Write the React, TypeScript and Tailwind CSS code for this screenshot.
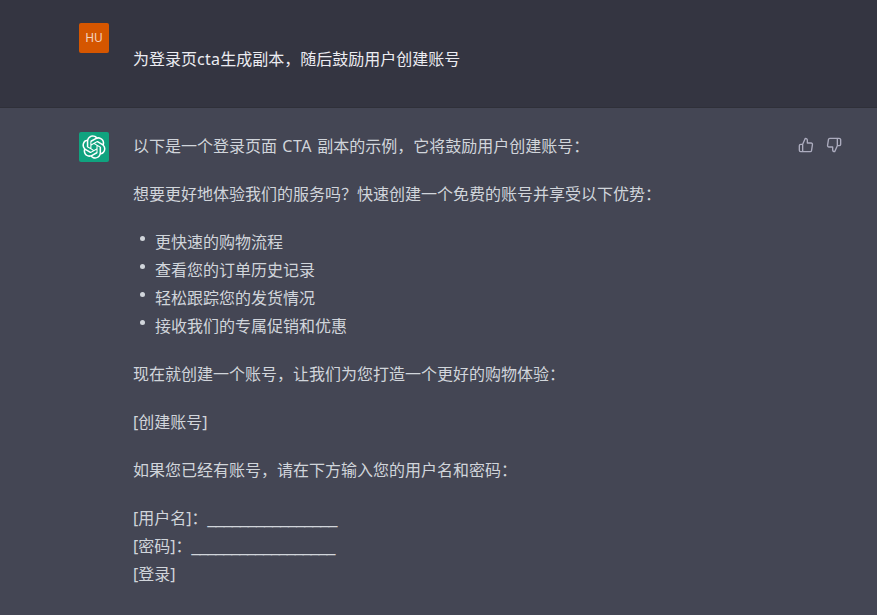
const font = "font-['Noto_Sans','Noto_Sans_CJK_SC',sans-serif]";

const openaiPath =
  "M37.5324 16.8707C37.9808 15.5241 38.1363 14.0974 37.9886 12.6859C37.8409 11.2744 37.3934 9.91076 36.676 8.68622C35.6126 6.83404 33.9882 5.3676 32.0373 4.4985C30.0864 3.62941 27.9098 3.40259 25.8215 3.85078C24.8796 2.7893 23.7219 1.94125 22.4257 1.36341C21.1295 0.785575 19.7249 0.491269 18.3058 0.500197C16.1708 0.495044 14.0893 1.16803 12.3614 2.42214C10.6335 3.67624 9.34853 5.44666 8.6917 7.47815C7.30085 7.76286 5.98686 8.3414 4.8377 9.17505C3.68854 10.0087 2.73073 11.0782 2.02839 12.312C0.956464 14.1591 0.498905 16.2988 0.721698 18.4228C0.944492 20.5467 1.83612 22.5449 3.268 24.1293C2.81966 25.4759 2.66413 26.9026 2.81182 28.3141C2.95951 29.7256 3.40701 31.0892 4.12437 32.3138C5.18791 34.1659 6.8123 35.6322 8.76321 36.5013C10.7141 37.3704 12.8907 37.5973 14.9789 37.1492C15.9208 38.2107 17.0786 39.0587 18.3747 39.6366C19.6709 40.2144 21.0755 40.5087 22.4946 40.4998C24.6307 40.5054 26.7133 39.8321 28.4418 38.5772C30.1704 37.3223 31.4556 35.5506 32.1119 33.5179C33.5027 33.2332 34.8167 32.6547 35.9659 31.821C37.115 30.9874 38.0728 29.9178 38.7752 28.684C39.8458 26.8371 40.3023 24.6979 40.0789 22.5748C39.8556 20.4517 38.9639 18.4544 37.5324 16.8707ZM22.4978 37.8849C20.7443 37.8874 19.0459 37.2733 17.6994 36.1501C17.7601 36.117 17.8666 36.0586 17.936 36.0161L25.9004 31.4156C26.1003 31.3019 26.2663 31.137 26.3813 30.9378C26.4964 30.7386 26.5563 30.5124 26.5549 30.2825V19.0542L29.9213 20.998C29.9389 21.0068 29.9541 21.0198 29.9656 21.0359C29.977 21.052 29.9842 21.0707 29.9867 21.0902V30.3889C29.9842 32.375 29.1946 34.2791 27.7909 35.6841C26.3872 37.0892 24.4838 37.8806 22.4978 37.8849ZM6.39227 31.0064C5.51397 29.4888 5.19742 27.7107 5.49804 25.9832C5.55718 26.0187 5.66048 26.0818 5.73461 26.1244L13.699 30.7248C13.8975 30.8408 14.1233 30.902 14.3532 30.902C14.583 30.902 14.8088 30.8408 15.0073 30.7248L24.731 25.1103V28.9979C24.7321 29.0177 24.7283 29.0376 24.7199 29.0556C24.7115 29.0736 24.6988 29.0893 24.6829 29.1012L16.6317 33.7497C14.9096 34.7416 12.8643 35.0097 10.9447 34.4954C9.02506 33.9811 7.38785 32.7263 6.39227 31.0064ZM4.29707 13.6194C5.17156 12.0998 6.55279 10.9364 8.19885 10.3327C8.19885 10.4013 8.19491 10.5228 8.19491 10.6071V19.808C8.19351 20.0378 8.25334 20.2638 8.36823 20.4629C8.48312 20.6619 8.64893 20.8267 8.84863 20.9404L18.5723 26.5542L15.206 28.4979C15.1894 28.5089 15.1703 28.5155 15.1505 28.5173C15.1307 28.5191 15.1107 28.516 15.0924 28.5082L7.04046 23.8557C5.32135 22.8601 4.06716 21.2235 3.55289 19.3046C3.03862 17.3858 3.30624 15.3413 4.29707 13.6194ZM31.955 20.0556L22.2312 14.4411L25.5976 12.4981C25.6142 12.4872 25.6333 12.4805 25.6531 12.4787C25.6729 12.4769 25.6928 12.4801 25.7111 12.4879L33.7631 17.1364C34.9967 17.849 36.0017 18.8982 36.6606 20.1613C37.3194 21.4244 37.6047 22.849 37.4832 24.2684C37.3617 25.6878 36.8382 27.0432 35.9743 28.1759C35.1103 29.3086 33.9415 30.1717 32.6047 30.6641C32.6047 30.5947 32.6047 30.4733 32.6047 30.3889V21.188C32.6066 20.9586 32.5474 20.7328 32.4332 20.5338C32.319 20.3348 32.154 20.1698 31.955 20.0556ZM35.3055 15.0128C35.2464 14.9765 35.1431 14.9142 35.069 14.8717L27.1045 10.2712C26.906 10.1554 26.6803 10.0943 26.4504 10.0943C26.2206 10.0943 25.9948 10.1554 25.7963 10.2712L16.0726 15.8858V11.9982C16.0715 11.9783 16.0753 11.9585 16.0837 11.9405C16.0921 11.9225 16.1048 11.9068 16.1207 11.8949L24.1719 7.25025C25.4053 6.53903 26.8158 6.19376 28.2383 6.25482C29.6608 6.31589 31.0364 6.78077 32.2044 7.59508C33.3723 8.40939 34.2842 9.53945 34.8334 10.8531C35.3826 12.1667 35.5464 13.6095 35.3055 15.0128ZM14.2424 21.9419L10.8752 19.9981C10.8576 19.9893 10.8423 19.9763 10.8309 19.9602C10.8195 19.9441 10.8122 19.9254 10.8098 19.9058V10.6071C10.8107 9.18295 11.2173 7.78848 11.9819 6.58696C12.7466 5.38544 13.8377 4.42659 15.1275 3.82264C16.4173 3.21869 17.8524 2.99464 19.2649 3.1767C20.6775 3.35876 22.0089 3.93941 23.1034 4.85067C23.0427 4.88379 22.937 4.94215 22.8668 4.98473L14.9024 9.58517C14.7025 9.69878 14.5366 9.86356 14.4215 10.0626C14.3065 10.2616 14.2466 10.4877 14.2479 10.7175L14.2424 21.9419ZM16.071 17.9991L20.4018 15.4978L24.7325 17.9975V22.9985L20.4018 25.4983L16.071 22.9985V17.9991Z";

const ThumbUp = () => (
  <svg viewBox="0 0 24 24" fill="none" stroke="currentColor" strokeWidth="2" strokeLinecap="round" strokeLinejoin="round" className="w-4 h-4">
    <path d="M14 9V5a3 3 0 0 0-3-3l-4 9v11h11.28a2 2 0 0 0 2-1.7l1.38-9a2 2 0 0 0-2-2.3zM7 22H4a2 2 0 0 1-2-2v-7a2 2 0 0 1 2-2h3" />
  </svg>
);

const ThumbDown = () => (
  <svg viewBox="0 0 24 24" fill="none" stroke="currentColor" strokeWidth="2" strokeLinecap="round" strokeLinejoin="round" className="w-4 h-4">
    <path d="M10 15v4a3 3 0 0 0 3 3l4-9V2H5.72a2 2 0 0 0-2 1.7l-1.38 9a2 2 0 0 0 2 2.3zm7-13h2.67A2.31 2.31 0 0 1 22 4v7a2.31 2.31 0 0 1-2.33 2H17" />
  </svg>
);

const bullets = ["更快速的购物流程", "查看您的订单历史记录", "轻松跟踪您的发货情况", "接收我们的专属促销和优惠"];

export default function App() {
  return (
    <div className={`${font} h-[615px] overflow-hidden bg-[#444654] text-base leading-7`}>
      {/* user message */}
      <div className="h-[108px] bg-[#343541] border-b border-[#2f3039] flex pl-[79px] pt-[23px] text-[#ececf1]">
        <div className="w-[30px] h-[30px] shrink-0 rounded-[2px] bg-[#d55600] flex items-center justify-center text-xs leading-none text-[#f3d3c0]">
          HU
        </div>
        <p className="ml-6 mt-[22px]">为登录页<span className="tracking-[0.3px]">cta</span>生成副本，随后鼓励用户创建账号</p>
      </div>

      {/* assistant message */}
      <div className="flex pl-[79px] pt-6 text-[#d1d5db]">
        <div className="w-[30px] h-[30px] shrink-0 rounded-[2px] bg-[#10a37f] flex items-center justify-center">
          <svg viewBox="0 0 41 41" fill="currentColor" className="w-6 h-6 text-white">
            <path d={openaiPath} />
          </svg>
        </div>
        <div className="ml-6 flex-1 flex flex-col gap-5">
          <p className="[word-spacing:1px]">以下是一个登录页面 <span className="tracking-[0.6px]">CTA</span> 副本的示例，它将鼓励用户创建账号：</p>
          <p>想要更好地体验我们的服务吗？快速创建一个免费的账号并享受以下优势：</p>
          <ul>
            {bullets.map((b) => (
              <li key={b} className="flex">
                <span className="w-[5px] h-[5px] mt-2 ml-[7px] mr-[10px] rounded-full bg-[#d1d5db]" />
                {b}
              </li>
            ))}
          </ul>
          <p>现在就创建一个账号，让我们为您打造一个更好的购物体验：</p>
          <p>[创建账号]</p>
          <p>如果您已经有账号，请在下方输入您的用户名和密码：</p>
          <div>
            <p className="h-7">[用户名]：<span className="font-['Liberation_Sans'] tracking-[-0.84px]">________________</span></p>
            <p className="h-7">[密码]：<span className="font-['Liberation_Sans'] tracking-[-0.96px]">__________________</span></p>
            <p className="h-7">[登录]</p>
          </div>
        </div>
        <div className="flex gap-3 pr-[35px] pt-[5px] text-[#acacbe]">
          <ThumbUp />
          <ThumbDown />
        </div>
      </div>
    </div>
  );
}
